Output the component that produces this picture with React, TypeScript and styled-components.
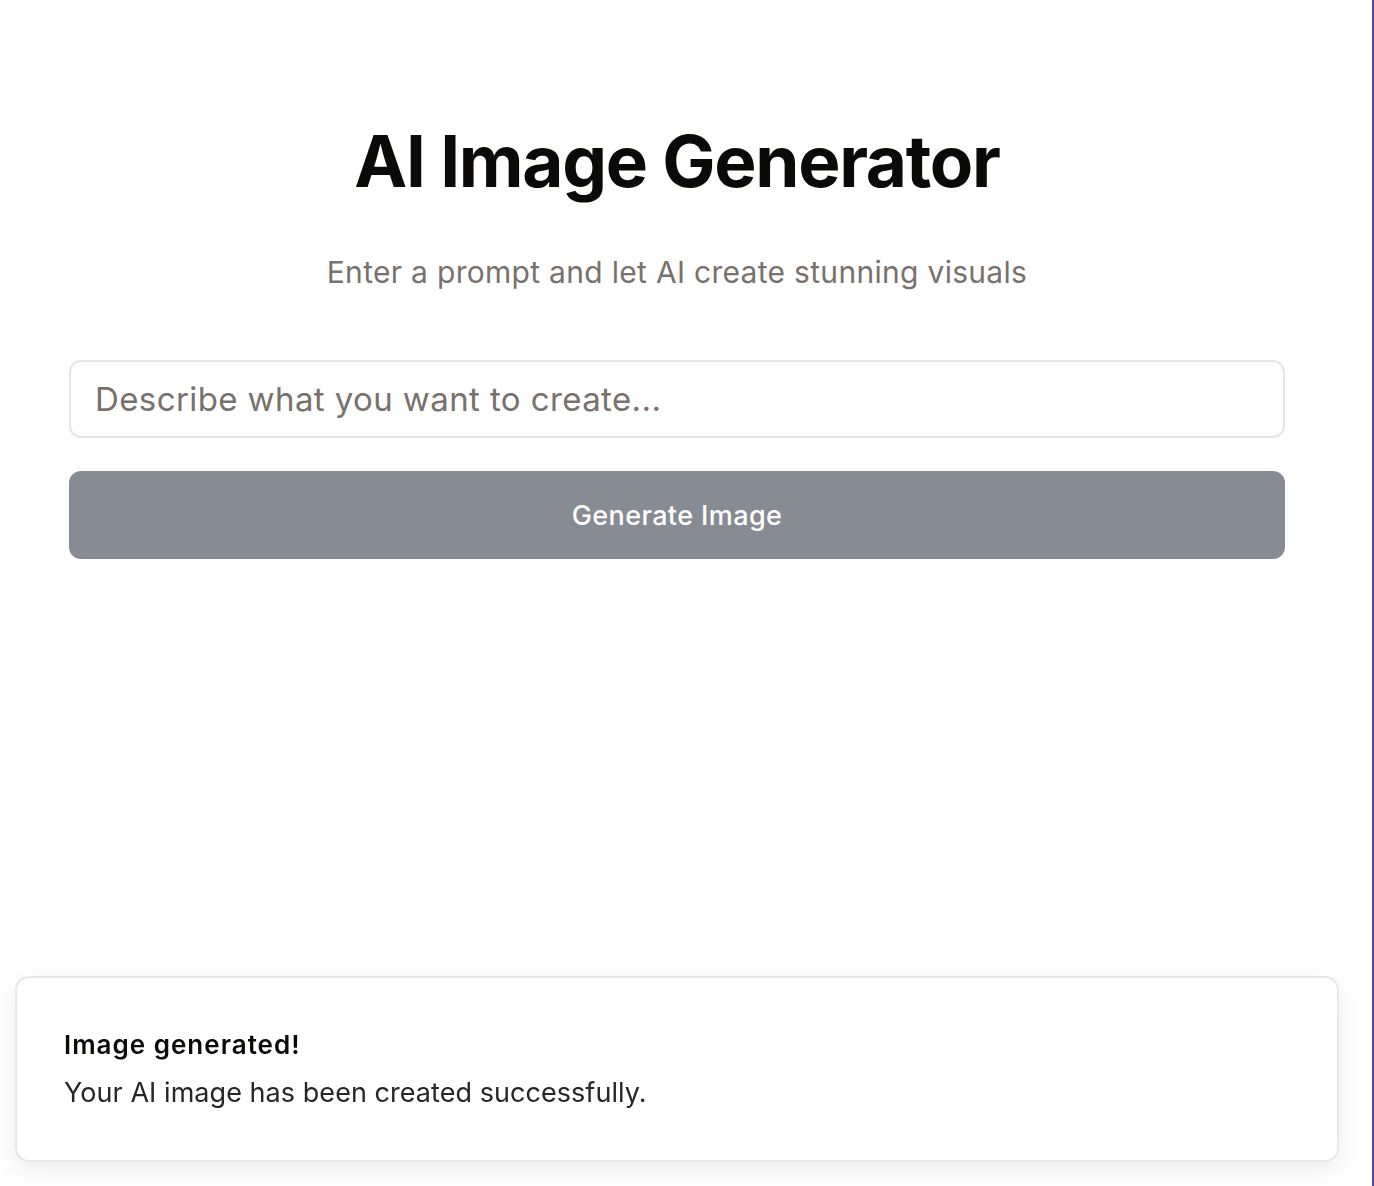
import React from 'react'
import styled, { createGlobalStyle } from 'styled-components'

const GlobalStyle = createGlobalStyle`
  html, body {
    margin: 0;
    padding: 0;
    background: #ffffff;
    font-family: Inter, "Noto Sans", sans-serif;
  }
  * {
    box-sizing: border-box;
  }
`

const Page = styled.div`
  display: flex;
  min-height: 1186px;
  width: 1374px;
`

const Main = styled.main`
  flex: 1;
  padding: 121px 87px 0 69px;
`

const Stripe = styled.div`
  width: 2px;
  background: #5a3fc9;
`

const Title = styled.h1`
  margin: 0;
  font-size: 71px;
  line-height: 80px;
  font-weight: 700;
  letter-spacing: -1.3px;
  text-align: center;
  color: #0c0a09;
`

const Subtitle = styled.p`
  margin: 51px 0 0;
  font-size: 30px;
  line-height: 40px;
  letter-spacing: 0.3px;
  text-align: center;
  color: #78716c;
`

const Form = styled.div`
  display: flex;
  flex-direction: column;
  gap: 33px;
  margin-top: 68px;
`

const PromptInput = styled.input`
  height: 78px;
  width: 100%;
  padding: 0 24px;
  border: 2px solid #e5e5e5;
  border-radius: 12px;
  font-family: inherit;
  font-size: 33px;
  letter-spacing: 0.4px;
  color: #1c1917;
  outline: none;

  &::placeholder {
    color: #78716c;
  }
`

const GenerateButton = styled.button`
  height: 88px;
  width: 100%;
  border: none;
  border-radius: 12px;
  background: #878b94;
  color: #ffffff;
  font-family: inherit;
  font-size: 27px;
  font-weight: 500;
  letter-spacing: 0.4px;
  cursor: not-allowed;
`

const Toast = styled.div`
  position: fixed;
  left: 15px;
  bottom: 24px;
  width: 1324px;
  height: 186px;
  padding: 0 47px;
  display: flex;
  flex-direction: column;
  justify-content: center;
  gap: 12px;
  background: #ffffff;
  border: 2px solid #e7e7e7;
  border-radius: 14px;
  box-shadow: 0 8px 24px rgba(0, 0, 0, 0.08);
`

const ToastTitle = styled.div`
  font-size: 26px;
  line-height: 36px;
  font-weight: 600;
  letter-spacing: 1px;
  color: #0c0a09;
`

const ToastText = styled.div`
  font-size: 27px;
  line-height: 36px;
  letter-spacing: 0.05px;
  color: #262626;
`

export default function App() {
  return (
    <>
      <GlobalStyle />
      <Page>
        <Main>
          <Title>AI Image Generator</Title>
          <Subtitle>Enter a prompt and let AI create stunning visuals</Subtitle>
          <Form>
            <PromptInput placeholder="Describe what you want to create..." />
            <GenerateButton disabled>Generate Image</GenerateButton>
          </Form>
        </Main>
        <Stripe />
      </Page>
      <Toast>
        <ToastTitle>Image generated!</ToastTitle>
        <ToastText>Your AI image has been created successfully.</ToastText>
      </Toast>
    </>
  )
}
